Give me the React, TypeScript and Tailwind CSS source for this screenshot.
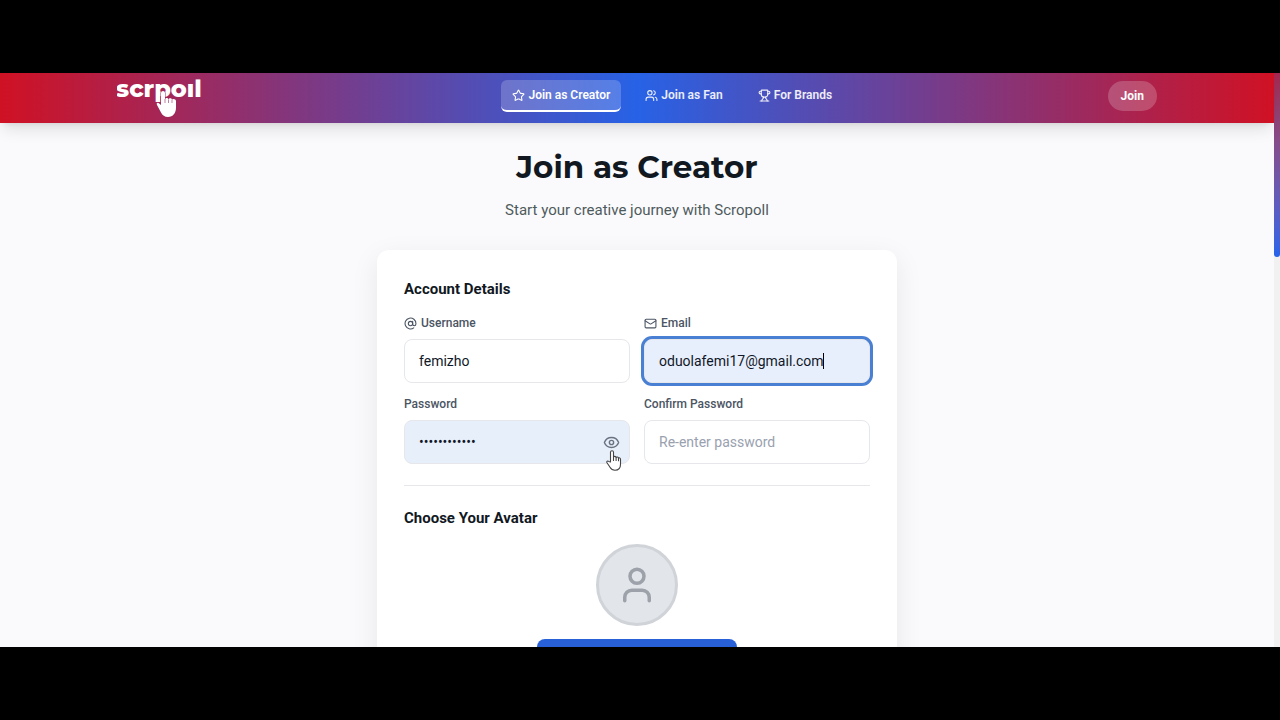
import { AtSign, Eye, Mail, Star, Trophy, User, Users } from "lucide-react";
import { useState } from "react";

const NAV_LINKS = [
  { label: "Join as Creator", icon: Star, active: true },
  { label: "Join as Fan", icon: Users, active: false },
  { label: "For Brands", icon: Trophy, active: false },
];

const labelClass =
  "flex h-4 items-center gap-1 text-xs font-medium text-[#4b5563]";
const inputClass =
  "h-11 w-full rounded-lg border border-gray-200 px-[14px] text-sm text-gray-900 outline-none placeholder:text-gray-400";

function Logo() {
  return (
    <a href="#" aria-label="Scropoll" className="block w-[120px] shrink-0">
      <svg width="100" height="50" viewBox="0 0 100 50" fill="#fff">
        <text
          x="-1"
          y="24"
          fontFamily="Montserrat, Lato, sans-serif"
          fontWeight="800"
          fontSize="24"
        >
          scrpoıl
        </text>
        {/* hand pressing on the stem of the p */}
        <path
          d="M44 20a2 2 0 0 1 4 0v6.500c.3-2 3.300-2 3.500 0 .5-1.700 3.300-1.500 3.400.3.800-1.400 4.100-.9 4.100 1.200v6.500c0 5.500-3 9.500-8 9.500-3.300 0-5.500-1.600-7-4.500l-4-7.500c-1-2 .8-3 2.200-1.600l1.800 1.600z"
          stroke="#972d62"
          strokeWidth="1"
          paintOrder="stroke"
        />
        <path
          d="M48 26v4M51.500 26.500v3.500M55 27v3"
          stroke="#972d62"
          strokeWidth="0.6"
        />
      </svg>
    </a>
  );
}

function NavBar() {
  return (
    <header className="relative z-10 h-[50px] bg-[linear-gradient(90deg,#d01124_0%,#2762e6_50%,#d01124_100%)] shadow-lg">
      <div className="mx-auto flex h-full max-w-[1040px] items-center justify-between">
        <Logo />
        <nav className="mb-1 flex gap-[13px]">
          {NAV_LINKS.map(({ label, icon: Icon, active }) => (
            <a
              key={label}
              href="#"
              className={`flex h-8 items-center gap-[3px] rounded-md border-b-2 px-[11px] text-xs font-semibold ${
                active
                  ? "border-white bg-white/20 text-white"
                  : "border-transparent text-white/90"
              }`}
            >
              <Icon size={13} />
              {label}
            </a>
          ))}
        </nav>
        <button className="mb-1 h-[30px] rounded-full bg-white/20 px-[13px] text-xs font-bold text-white">
          Join
        </button>
      </div>
    </header>
  );
}

function HandCursor() {
  return (
    <svg
      width="16"
      height="21"
      viewBox="0 0 16 21"
      className="pointer-events-none absolute top-[30px] right-[8px] z-10"
      fill="#fff"
      stroke="#444"
      strokeWidth="1.1"
      strokeLinejoin="round"
      strokeLinecap="round"
    >
      <path d="M4.500 12V2.300a1.500 1.500 0 0 1 3 0V7c.4-1 2.400-.8 2.600.4.5-.8 2.200-.5 2.400.7.600-.7 2-.2 2 1.100v5c0 3.500-2 6-5.500 6-2.600 0-3.800-1-5-3L1 12.800c-.7-1.300.7-2.300 1.800-1.400z" />
      <path d="M7.500 7v3.500M10.100 7.500v3M12.500 8.200v2.500" />
    </svg>
  );
}

function AccountDetails() {
  const [username, setUsername] = useState("femizho");
  const [email, setEmail] = useState("oduolafemi17@gmail.com");
  const [password, setPassword] = useState("creator12345");
  const [confirm, setConfirm] = useState("");

  return (
    <section className="border-b border-gray-200 pb-[21px]">
      <h2 className="text-[15px] leading-6 font-bold text-[#11181f]">
        Account Details
      </h2>
      <div className="mt-[14px] grid grid-cols-2 gap-x-[14px] gap-y-[13px]">
        <div className="flex flex-col gap-2">
          <label htmlFor="username" className={labelClass}>
            <AtSign size={13} />
            Username
          </label>
          <input
            id="username"
            value={username}
            onChange={(e) => setUsername(e.target.value)}
            className={inputClass}
          />
        </div>

        <div className="flex flex-col gap-2">
          <label htmlFor="email" className={labelClass}>
            <Mail size={13} />
            Email
          </label>
          <div className="relative">
            <input
              id="email"
              type="email"
              value={email}
              onChange={(e) => setEmail(e.target.value)}
              className={`${inputClass} bg-[#e8effc] ring-3 ring-[#4a80d4]`}
            />
            <span className="absolute top-[14px] left-[179px] h-4 w-px bg-black" />
          </div>
        </div>

        <div className="flex flex-col gap-2">
          <label htmlFor="password" className={labelClass}>
            Password
          </label>
          <div className="relative">
            <input
              id="password"
              type="password"
              value={password}
              onChange={(e) => setPassword(e.target.value)}
              className={`${inputClass} bg-[#e7effb]`}
            />
            <button
              type="button"
              aria-label="Show password"
              className="absolute inset-y-0 right-[10px] text-gray-500"
            >
              <Eye size={17} />
            </button>
            <HandCursor />
          </div>
        </div>

        <div className="flex flex-col gap-2">
          <label htmlFor="confirm" className={labelClass}>
            Confirm Password
          </label>
          <input
            id="confirm"
            type="password"
            placeholder="Re-enter password"
            value={confirm}
            onChange={(e) => setConfirm(e.target.value)}
            className={inputClass}
          />
        </div>
      </div>
    </section>
  );
}

function AvatarPicker() {
  return (
    <section className="pt-5">
      <h2 className="text-[15px] leading-6 font-bold text-[#11181f]">
        Choose Your Avatar
      </h2>
      <div className="mt-[14px] flex flex-col items-center gap-[13px]">
        <div className="flex size-[82px] items-center justify-center rounded-full border-3 border-[#d0d3d8] bg-[#e2e6ea] text-[#9ca1aa]">
          <User size={42} />
        </div>
        <button
          type="button"
          aria-label="Upload avatar"
          className="h-10 w-[200px] rounded-lg bg-[#2860d8]"
        />
      </div>
    </section>
  );
}

export default function App() {
  return (
    <div className="flex h-screen flex-col bg-black py-[73px] font-['Roboto',sans-serif]">
      <div className="flex min-h-0 flex-1 overflow-hidden bg-[#fafafc]">
        <div className="min-w-0 flex-1">
          <NavBar />
          <main className="px-4 pt-6">
            <h1 className="text-center font-['Montserrat','Inter',sans-serif] text-[31px] leading-10 font-bold text-[#11181f]">
              Join as Creator
            </h1>
            <p className="mt-[11px] text-center text-[15px] leading-6 text-[#4f5a5c]">
              Start your creative journey with Scropoll
            </p>
            <form className="mx-auto mt-7 max-w-[520px] rounded-xl bg-white p-[27px] shadow-[0_8px_28px_rgba(0,0,0,0.08)]">
              <AccountDetails />
              <AvatarPicker />
            </form>
          </main>
        </div>
        {/* scrollbar */}
        <div className="w-[6px] bg-[#f1f1f1]">
          <div className="h-[184px] rounded-b bg-linear-to-b from-[#a5254f] to-[#2563eb]" />
        </div>
      </div>
    </div>
  );
}
